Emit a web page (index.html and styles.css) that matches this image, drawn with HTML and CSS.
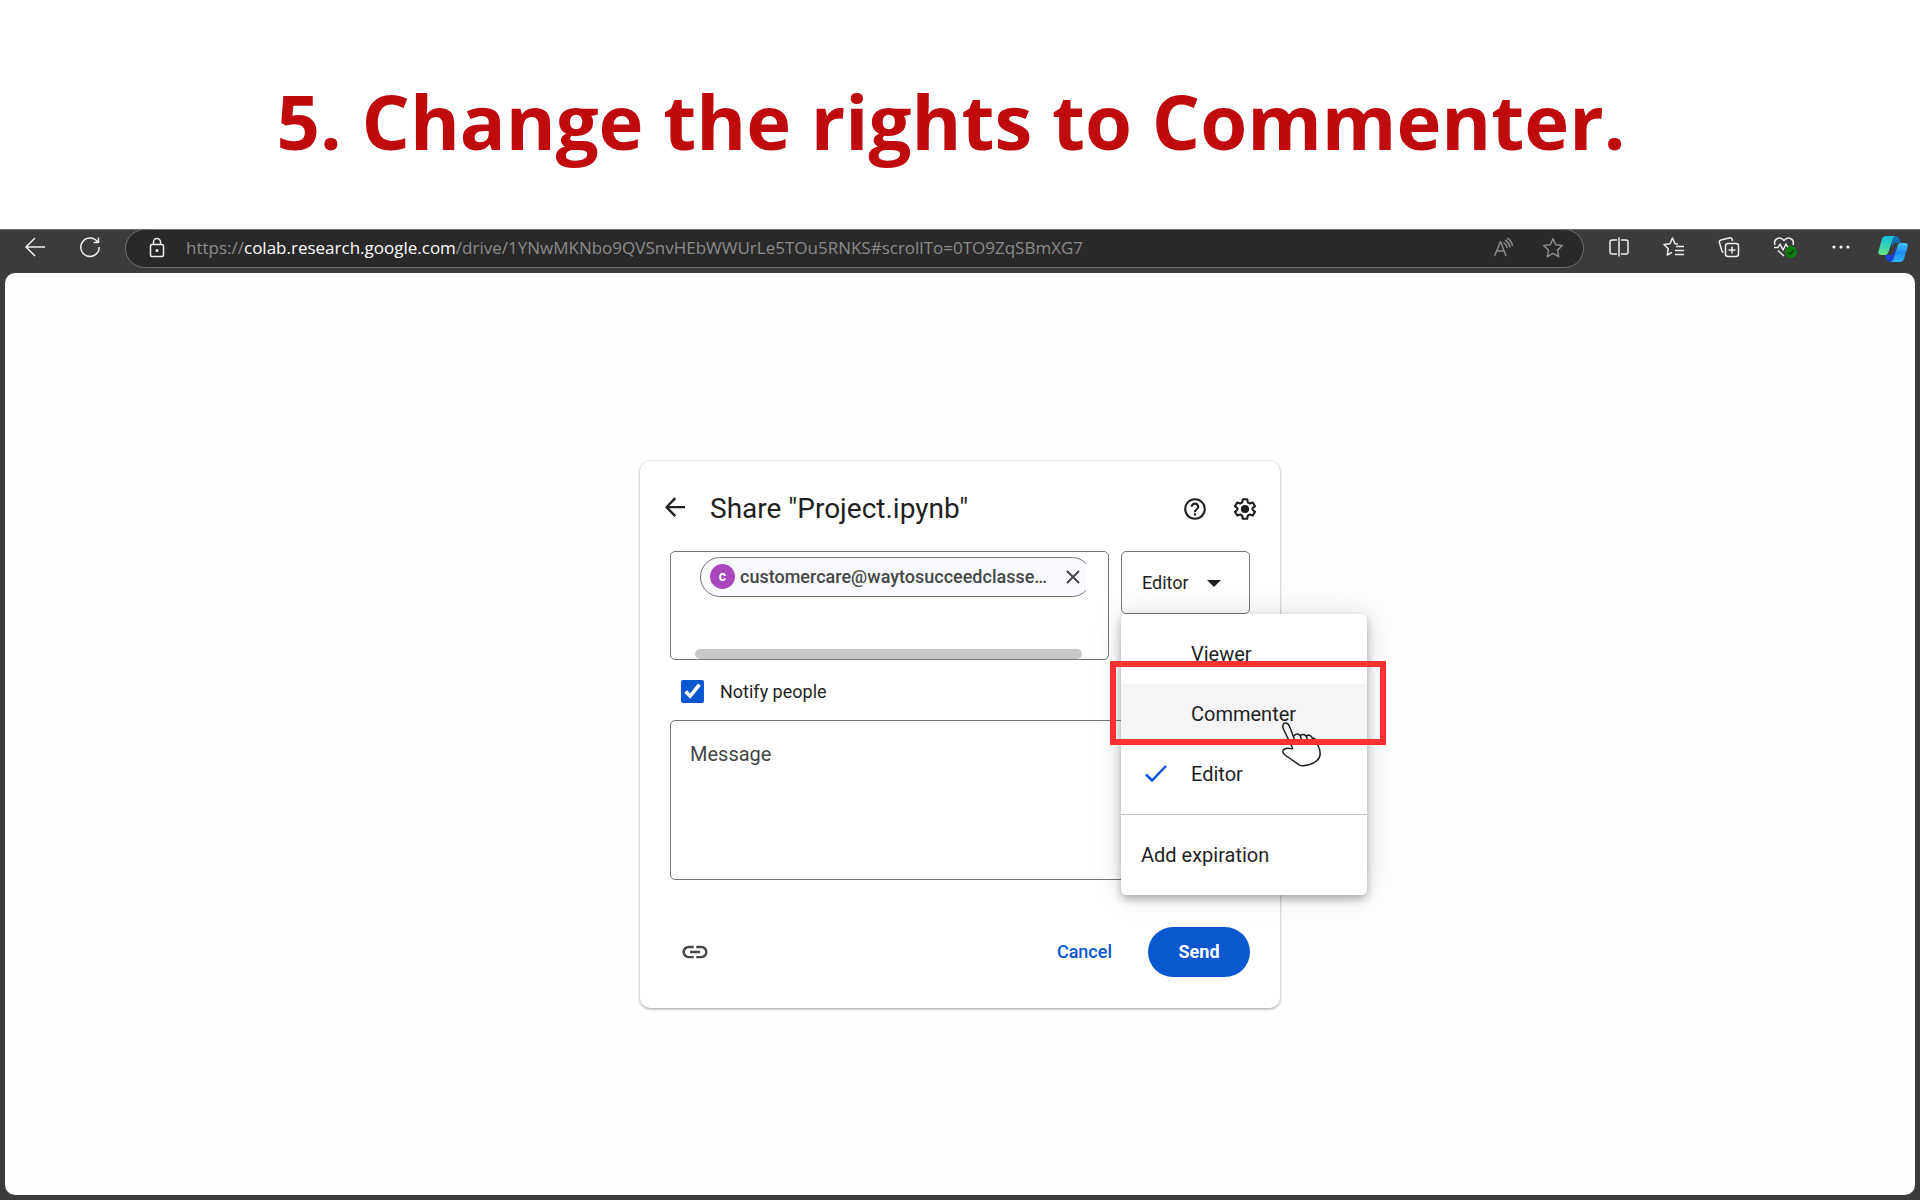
FILE: index.html
```html
<!DOCTYPE html>
<html lang="en">
<head>
<meta charset="utf-8">
<title>Change the rights to Commenter</title>
<link rel="stylesheet" href="styles.css">
</head>
<body>
<header class="step">
  <h1 class="step-title">5. Change the rights to Commenter.</h1>
</header>
<section class="browser">
  <nav class="toolbar" aria-label="Browser toolbar">
    <div class="nav-buttons">
      <button class="tool" aria-label="Back"><svg width="24" height="24" viewBox="0 0 24 24"><path d="M22 12H3M12 3L3 12l9 9"/></svg></button>
      <button class="tool" aria-label="Refresh"><svg width="24" height="24" viewBox="0 0 24 24"><path d="M19.6 7A9.2 9.2 0 1 0 21.200 12M20.500 2.500v5h-5"/></svg></button>
    </div>
    <div class="address">
      <svg class="lock" width="24" height="24" viewBox="0 0 24 24"><rect x="5.500" y="8.500" width="13" height="12" rx="1.500"/><path d="M8.500 8.500V6a3.500 3.500 0 0 1 7 0v2.500"/><circle cx="12" cy="14.500" r=".8"/></svg>
      <a class="url" href="#">https://<span class="host">colab.research.google.com</span>/drive/1YNwMKNbo9QVSnvHEbWWUrLe5TOu5RNKS#scrollTo=0TO9ZqSBmXG7</a>
      <button class="tool dim" aria-label="Read aloud"><svg width="24" height="24" viewBox="0 0 24 24"><path d="M3.500 20L9.500 5.500 15 20M5.500 15h7.500M12.500 6.500q3 2 3.500 5.500M14 4q4 2.500 5 7.500M16 2q4.500 2.500 5.500 8"/></svg></button>
      <button class="tool dim" aria-label="Add to favourites"><svg width="24" height="24" viewBox="0 0 24 24"><path d="M12 2.800l2.800 6 6.400.8-4.700 4.500 1.200 6.500L12 17.400l-5.700 3.200 1.200-6.500L2.800 9.600l6.400-.8z"/></svg></button>
    </div>
    <div class="extras">
      <button class="tool" aria-label="Split screen"><svg width="24" height="24" viewBox="0 0 24 24"><path d="M10 5H5a2 2 0 0 0-2 2v10a2 2 0 0 0 2 2h5M14 5h5a2 2 0 0 1 2 2v10a2 2 0 0 1-2 2h-5M12 2.500v19"/></svg></button>
      <button class="tool" aria-label="Favourites"><svg width="24" height="24" viewBox="0 0 24 24"><path d="M16 9l-3-.3L10.500 3 8 8.700l-6 .8 4.300 4.200-1 6.300 4.700-2.700M14 11.500h8M13 15.500h9M13 19.500h9"/></svg></button>
      <button class="tool" aria-label="Collections"><svg width="24" height="24" viewBox="0 0 24 24"><rect x="8.500" y="8.500" width="13" height="13" rx="2.500"/><path d="M15 11.500v7M11.500 15h7M15.500 6l-.5-2q-.5-1.500-2-1.200L4 5Q2 5.500 2.400 7.500L5 16q.5 1.200 1.500 1.500"/></svg></button>
      <button class="tool" aria-label="Browser essentials"><svg width="26" height="24" viewBox="0 0 26 24"><path d="M3 10C1 4 8 .5 12 5.500 16 .5 23 4 21 10M2 12.500h4l2-3.500 3 6 3-6 2 3.500h3M6 15.500l6 5.500"/><circle class="ok" cx="19" cy="17" r="6"/><path class="ok-tick" d="M16 17l2 2 4-4"/></svg></button>
      <button class="tool" aria-label="Settings and more"><svg width="24" height="24" viewBox="0 0 24 24"><g class="dots"><circle cx="5" cy="12" r="1.600"/><circle cx="12" cy="12" r="1.600"/><circle cx="19" cy="12" r="1.600"/></g></svg></button>
      <button class="tool copilot" aria-label="Copilot"><svg width="30" height="28" viewBox="0 0 30 28">
        <defs>
          <linearGradient id="ca" x1="0" y1="0" x2="0" y2="1"><stop offset="0" stop-color="#1cbfe6"/><stop offset=".6" stop-color="#3ad4b0"/><stop offset="1" stop-color="#6be07c"/></linearGradient>
          <linearGradient id="cb" x1="0" y1="0" x2="0" y2="1"><stop offset="0" stop-color="#3fc4fb"/><stop offset=".5" stop-color="#1f8df0"/><stop offset="1" stop-color="#30b4f8"/></linearGradient>
        </defs>
        <path fill="#136fae" d="M12 1h6q2.500 0 3.500 3l1.500 4h-5q-3 0-4 4z"/>
        <path fill="#1c43d6" d="M7 20h6q2.500 0 3.500-4l2-6-2 14q-1 3-3.500 3h-1q-3 0-4-3z"/>
        <path fill="url(#ca)" d="M8 1h10q-2.500 0-3.500 3l-4 13q-1 3-3.500 3H3q-3.500 0-2.500-4L4 4q1-3 4-3z"/>
        <path fill="url(#cb)" d="M22 27H12q2.500 0 3.500-3l4-13q1-3 3.500-3h4q3.500 0 2.500 4L26 24q-1 3-4 3z"/>
      </svg></button>
    </div>
  </nav>
  <main class="page">
    <form class="dialog" aria-label="Share">
      <div class="dialog-head">
        <button type="button" class="icon" aria-label="Back"><svg width="30" height="30" viewBox="0 0 24 24"><path d="M20 9.600H7.400l5.500-5.600L11.500 2.600 4 10.500l7.500 7.900 1.400-1.400-5.500-5.600H20z"/></svg></button>
        <h2 class="dialog-title">Share "Project.ipynb"</h2>
        <button type="button" class="icon" aria-label="Help"><svg width="26" height="26" viewBox="0 0 24 24"><path d="M11 18h2v-2h-2v2zm1-16C6.480 2 2 6.480 2 12s4.480 10 10 10 10-4.480 10-10S17.520 2 12 2zm0 18c-4.410 0-8-3.590-8-8s3.590-8 8-8 8 3.590 8 8-3.590 8-8 8zm0-14c-2.210 0-4 1.790-4 4h2c0-1.100.9-2 2-2s2 .9 2 2c0 2-3 1.750-3 5h2c0-2.250 3-2.500 3-5 0-2.210-1.790-4-4-4z"/></svg></button>
        <button type="button" class="icon" aria-label="Settings"><svg width="26" height="26" viewBox="0 0 24 24"><path class="gear" d="M10 3h4l.6 2.900 1.800 1 2.800-.9 2 3.400L19 11.300v1.400l2.200 1.900-2 3.400-2.800-.9-1.800 1L14 21h-4l-.6-2.900-1.800-1-2.800.9-2-3.400L5 12.700v-1.400L2.800 9.400l2-3.400 2.800.9 1.800-1z"/><circle cx="12" cy="12" r="3.800"/></svg></button>
      </div>
      <div class="people">
        <div class="recipients">
          <div class="chip-view">
            <span class="chip">
              <span class="avatar">c</span>
              <span class="chip-text">customercare@waytosucceedclasse…</span>
              <button type="button" class="icon remove" aria-label="Remove"><svg width="14" height="14" viewBox="0 0 14 14"><path d="M1 1l12 12M13 1L1 13"/></svg></button>
            </span>
          </div>
          <div class="scroll-thumb"></div>
        </div>
        <div class="role">
          <select class="role-select" aria-label="Role"><option>Editor</option></select>
          <svg class="caret" width="14" height="7" viewBox="0 0 14 7"><path d="M0 0h14L7 7z"/></svg>
          <div class="menu" role="menu">
            <button type="button" class="item" role="menuitem">Viewer</button>
            <button type="button" class="item current" role="menuitem">Commenter</button>
            <button type="button" class="item" role="menuitem"><svg class="tick" width="22" height="17" viewBox="0 0 22 17"><path d="M1 9.500l6 6L21 1"/></svg>Editor</button>
            <hr class="rule">
            <button type="button" class="item flush" role="menuitem">Add expiration</button>
            <svg class="hand" width="42" height="48" viewBox="0 0 42 48"><path d="M12 28L2.700 8.500C1 5 2 2 4.500 2 6.500 2 7.500 3 8.300 5L13 17v4M13 15q1.200-2.500 3.500-2t3 2.500l1 3M19.500 14.500q2-1.700 4-.8 1.800.8 2.300 2.800l.7 2.500M25.500 15q2-1.500 3.800-.4 1.700 1 2.200 2.900l.5 1.500M31 17q3-.5 4.500 3.500l2 5q4 9-1.500 14-5 4.500-14 5.300-2 .2-4-1L4 34Q1 31.500 2.200 29 4.500 26 12 28"/></svg>
            <div class="marker"></div>
          </div>
        </div>
      </div>
      <label class="notify"><input type="checkbox" class="check" checked>Notify people</label>
      <textarea class="message" aria-label="Message" placeholder="Message"></textarea>
      <div class="actions">
        <button type="button" class="icon" aria-label="Copy link"><svg width="30" height="30" viewBox="0 0 24 24"><path d="M3.900 12c0-1.710 1.390-3.100 3.100-3.100h4V7H7c-2.760 0-5 2.240-5 5s2.240 5 5 5h4v-1.900H7c-1.710 0-3.100-1.390-3.100-3.100zM8 13h8v-2H8v2zm9-6h-4v1.900h4c1.710 0 3.100 1.390 3.100 3.100s-1.390 3.100-3.100 3.100h-4V17h4c2.760 0 5-2.240 5-5s-2.240-5-5-5z"/></svg></button>
        <button type="button" class="cancel">Cancel</button>
        <button type="submit" class="send">Send</button>
      </div>
    </form>
  </main>
</section>
</body>
</html>
```

FILE: styles.css
```css
* { box-sizing: border-box; }
body {
  margin: 0;
  min-height: 100vh;
  display: flex;
  flex-direction: column;
  background: #fff;
  font-family: Roboto, "Liberation Sans", sans-serif;
  color: #1f1f1f;
}
button { padding: 0; border: 0; background: none; font: inherit; color: inherit; cursor: pointer; }
svg { display: block; }

.step { padding: 66px 58px 53px 40px; text-align: center; }
.step-title {
  margin: 0;
  font: 700 76px/110px "Open Sans", sans-serif;
  color: #bf0a0e;
}

.browser {
  flex: 1;
  display: flex;
  flex-direction: column;
  padding: 0 5px 5px;
  background: #3b3b3b;
  border-top: 1px solid #707070;
}
.toolbar { display: flex; align-items: flex-start; height: 43px; }
.nav-buttons { display: flex; gap: 31px; padding: 5px 23px 0 18px; }
.tool { flex: none; height: 24px; }
.tool svg, .lock { fill: none; stroke: #f0f0f0; stroke-width: 1.5; stroke-linejoin: round; }
.tool.dim svg { stroke: #8c8c8c; }
.tool .dots { fill: #fff; stroke: none; }
.tool .ok { fill: #107c10; stroke: none; }
.tool .ok-tick { stroke: #123d12; }
.address {
  flex: 1;
  display: flex;
  align-items: center;
  gap: 26px;
  height: 39px;
  margin-top: -1px;
  padding: 0 18px 2px 19px;
  border: 1px solid #707070;
  border-radius: 20px;
  background: #292929;
}
.lock { flex: none; }
.url {
  flex: 1;
  font: 17px/24px "Open Sans", sans-serif;
  color: #8c8c8c;
  text-decoration: none;
  white-space: nowrap;
  margin-left: -9px;
}
.host { color: #fff; }
.extras { display: flex; gap: 31px; padding: 5px 7px 0 23px; }
.copilot { margin-left: -6px; }
.tool.copilot svg { stroke: none; }

.page {
  flex: 1;
  display: flex;
  align-items: center;
  justify-content: center;
  border-radius: 10px;
  background: #fefefe;
}
.dialog {
  width: 640px;
  padding: 30px 30px 31px;
  border-radius: 10px;
  background: #fff;
  box-shadow: 0 1px 3px rgba(0, 0, 0, .4);
}
.icon { flex: none; }
.icon svg { fill: #1f1f1f; }
.icon .gear { fill: none; stroke: #1f1f1f; stroke-width: 2; stroke-linejoin: round; }
.dialog-head { display: flex; align-items: center; gap: 24px; height: 36px; margin: 0 -8px 24px -10px; }
.dialog-title {
  flex: 1;
  margin: 0 0 0 -4px;
  font: 400 28px/36px Roboto, sans-serif;
}
.people { display: flex; align-items: flex-start; gap: 12px; }
.recipients {
  flex: 1;
  min-width: 0;
  display: flex;
  flex-direction: column;
  justify-content: space-between;
  height: 109px;
  padding: 5px 22px 0 24px;
  border: 1px solid #747775;
  border-radius: 5px;
}
.chip-view { overflow: hidden; padding-left: 5px; }
.chip {
  display: flex;
  align-items: center;
  width: 392px;
  height: 40px;
  padding-left: 9px;
  border: 1px solid #747775;
  border-radius: 20px;
  background: #f9faff;
}
.avatar {
  width: 25px;
  height: 25px;
  border-radius: 50%;
  background: #ab47bc;
  color: #fff;
  font: 700 14px/24px Roboto, sans-serif;
  text-align: center;
}
.chip-text { flex: 1; margin-left: 5px; font-size: 18px; font-weight: 500; line-height: 24px; color: #444746; }
.remove { margin-right: 11px; }
.icon.remove svg { stroke: #444746; stroke-width: 2; }
.scroll-thumb { height: 10px; margin-right: 4px; border-radius: 5px; background: #c7c7c7; }
.role { position: relative; flex: none; width: 129px; }
.role-select {
  display: block;
  width: 100%;
  height: 63px;
  padding: 1px 20px 0;
  appearance: none;
  border: 1px solid #747775;
  border-radius: 5px;
  background: #fff;
  font: 18px/24px Roboto, sans-serif;
  color: #1f1f1f;
}
.caret { position: absolute; right: 29px; top: 29px; fill: #1f1f1f; pointer-events: none; }
.menu {
  position: absolute;
  top: 63px;
  left: 0;
  width: 246px;
  padding: 10px 0;
  border-radius: 5px;
  background: #fff;
  box-shadow: 0 4px 8px rgba(0, 0, 0, .3), 0 0 30px rgba(0, 0, 0, .12);
}
.item {
  position: relative;
  display: flex;
  align-items: center;
  width: 100%;
  height: 60px;
  padding-left: 70px;
  font-size: 20px;
  line-height: 28px;
}
.current { background: #f5f5f5; }
.flush { padding-left: 20px; }
.tick { position: absolute; left: 24px; fill: none; stroke: #0b57d0; stroke-width: 2.500; }
.rule { margin: 10px 0; border: 0; border-top: 1px solid #c7c7c7; }
.marker {
  position: absolute;
  top: 47px;
  left: -11px;
  width: 276px;
  height: 84px;
  border: 6px solid #ff3131;
}
.hand { position: absolute; top: 107px; left: 160px; fill: none; stroke: #1f1f1f; stroke-width: 1.500; stroke-linejoin: round; }

.notify {
  display: flex;
  align-items: center;
  gap: 16px;
  height: 24px;
  margin: 20px 0 16px 11px;
  font-size: 18px;
  line-height: 24px;
}
.check { width: 23px; height: 23px; margin: 0; accent-color: #0b57d0; }
.message {
  display: block;
  width: 100%;
  height: 160px;
  padding: 19px;
  border: 1px solid #747775;
  border-radius: 5px;
  background: #fff;
  resize: none;
  font: 20px/28px Roboto, sans-serif;
}
.message::placeholder { color: #444746; opacity: 1; }
.actions { display: flex; align-items: center; margin-top: 47px; padding-left: 10px; }
.actions .icon svg { fill: #444746; }
.cancel { margin-left: auto; margin-right: 36px; font-size: 18px; font-weight: 500; line-height: 24px; color: #0b57d0; }
.send { width: 102px; height: 50px; border-radius: 25px; background: #0b57d0; color: #fff; font-size: 18px; font-weight: 700; line-height: 24px; }
```
